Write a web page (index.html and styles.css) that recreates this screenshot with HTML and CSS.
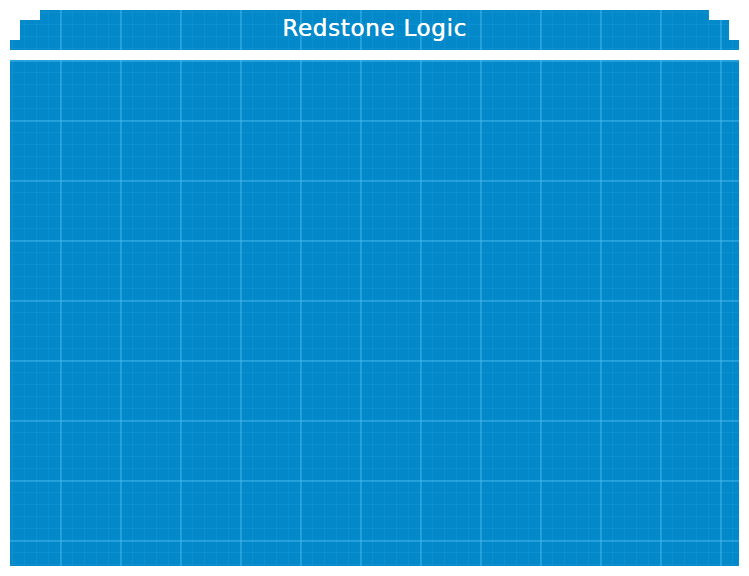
FILE: index.html
```html
<!DOCTYPE html>
<html lang="en">
<head>
<meta charset="utf-8">
<title>Redstone Logic</title>
<link rel="stylesheet" href="styles.css">
</head>
<body>
<header class="title-bar">
  <h1 class="title">Redstone Logic</h1>
</header>
<main class="canvas"></main>
</body>
</html>
```

FILE: styles.css
```css
html, body {
  margin: 0;
  padding: 0;
  background: #ffffff;
}

body {
  padding: 10px;
  display: flex;
  flex-direction: column;
  gap: 10px;
  height: 576px;
  box-sizing: border-box;
  overflow: hidden;
}

.title-bar,
.canvas {
  background-color: #0388c9;
  background-image:
    linear-gradient(to right, rgba(79, 195, 247, 0.38) 0 2px, transparent 2px),
    linear-gradient(to bottom, rgba(79, 195, 247, 0.38) 0 2px, transparent 2px),
    linear-gradient(to right, rgba(79, 195, 247, 0.13) 0 1px, transparent 1px),
    linear-gradient(to bottom, rgba(79, 195, 247, 0.13) 0 1px, transparent 1px);
  background-size: 60px 60px, 60px 60px, 12px 12px, 12px 12px;
  background-attachment: fixed;
}

.title-bar {
  height: 40px;
  flex: 0 0 40px;
  display: flex;
  align-items: center;
  justify-content: center;
  clip-path: polygon(
    30px 0, calc(100% - 30px) 0,
    calc(100% - 30px) 10px, calc(100% - 10px) 10px,
    calc(100% - 10px) 30px, 100% 30px,
    100% 100%, 0 100%,
    0 30px, 10px 30px,
    10px 10px, 30px 10px
  );
}

.title {
  margin: 0 0 3px 0;
  font-family: "DejaVu Sans", sans-serif;
  font-size: 23px;
  font-weight: normal;
  letter-spacing: 0.7px;
  color: #ffffff;
  line-height: 1;
  text-shadow: 0.4px 0 0 #ffffff;
}

.canvas {
  flex: 1 1 auto;
}
```
